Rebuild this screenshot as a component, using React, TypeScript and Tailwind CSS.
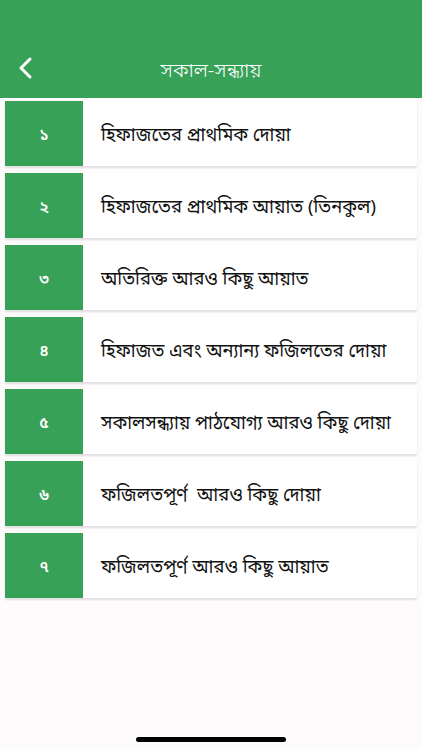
const items = [
  { num: '১', title: 'হিফাজতের প্রাথমিক দোয়া' },
  { num: '২', title: 'হিফাজতের প্রাথমিক আয়াত (তিনকুল)' },
  { num: '৩', title: 'অতিরিক্ত আরও কিছু আয়াত' },
  { num: '৪', title: 'হিফাজত এবং অন্যান্য ফজিলতের দোয়া' },
  { num: '৫', title: 'সকালসন্ধ্যায় পাঠযোগ্য আরও কিছু দোয়া' },
  { num: '৬', title: 'ফজিলতপূর্ণ  আরও কিছু দোয়া' },
  { num: '৭', title: 'ফজিলতপূর্ণ আরও কিছু আয়াত' },
];

export default function App() {
  return (
    <div
      className="relative w-[422px] h-[750px] bg-[#fdfbfc] flex flex-col overflow-hidden"
      style={{ fontFamily: '"Noto Sans", "Noto Sans Bengali", sans-serif' }}
    >
      {/* Header */}
      <div className="h-[98px] bg-[#37a157] flex items-end shrink-0">
        <div className="relative w-full h-[52px] flex items-center justify-center">
          <button className="absolute left-[15px] top-[9px] text-white">
            <svg width="22" height="26" viewBox="0 0 22 26" fill="none">
              <path d="M15 4 L6 13 L15 22" stroke="white" strokeWidth="3" strokeLinecap="round" strokeLinejoin="round" />
            </svg>
          </button>
          <h1 className="text-white text-[20px] font-light leading-none pb-[4px]">সকাল-সন্ধ্যায়</h1>
        </div>
      </div>

      {/* List */}
      <div className="flex flex-col gap-[7px] pt-[3px] pl-[5px] pr-[5px]">
        {items.map((item) => (
          <div
            key={item.num}
            className="flex h-[65px] bg-white shadow-[0_2px_2px_rgba(0,0,0,0.12)]"
          >
            <div className="w-[78px] shrink-0 bg-[#37a157] flex items-center justify-center text-white text-[16px] font-semibold">
              {item.num}
            </div>
            <div className="flex-1 flex items-center pl-[18px] text-[#111] text-[18.3px] whitespace-pre">
              {item.title}
            </div>
          </div>
        ))}
      </div>

      {/* Home indicator */}
      <div className="absolute bottom-[8px] left-[136px] w-[150px] h-[5px] rounded-full bg-black" />
    </div>
  );
}
